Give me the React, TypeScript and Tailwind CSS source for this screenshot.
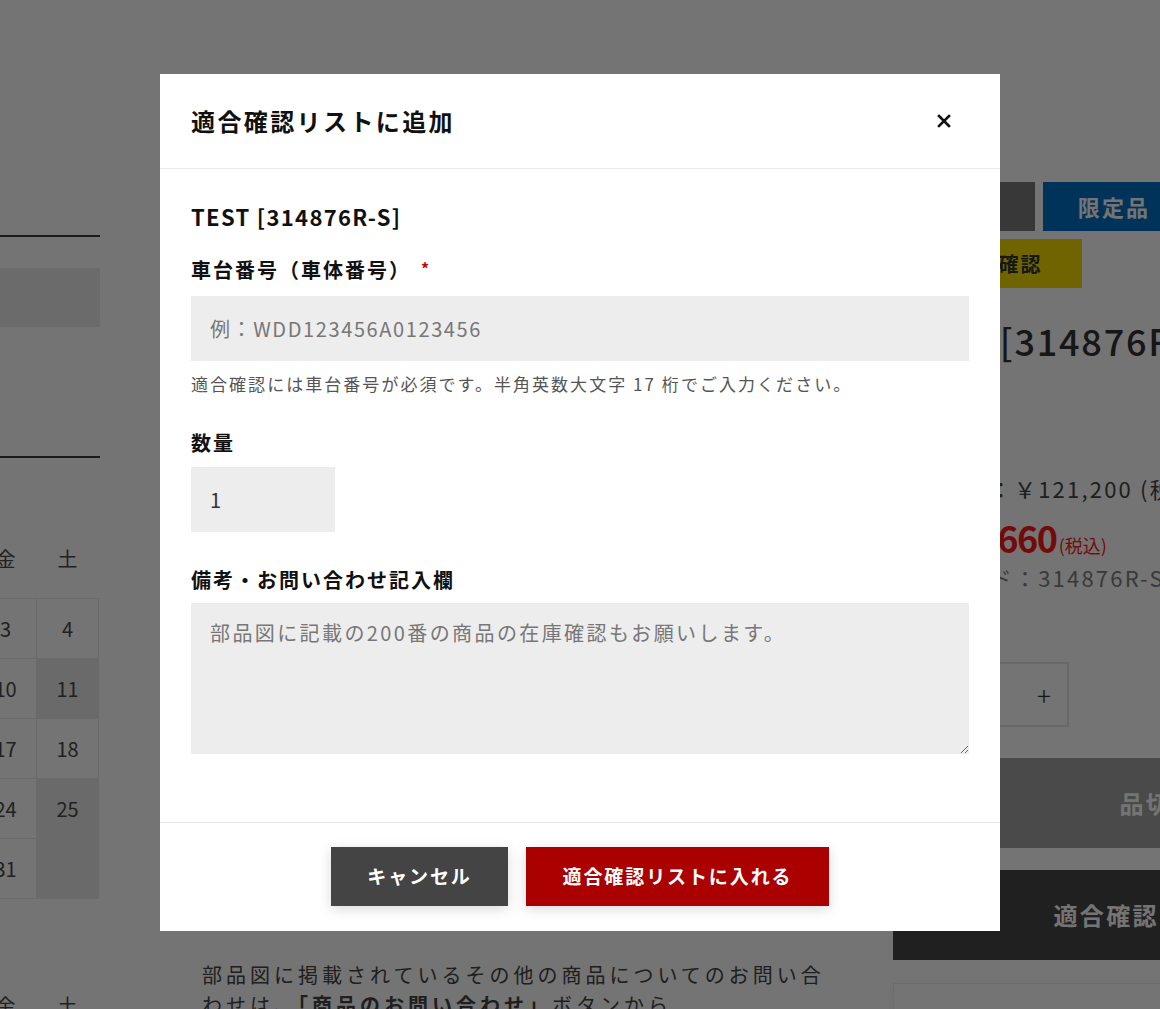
import { useState } from 'react';

const WEEK = ['日', '月', '火', '水', '木', '金', '土'];

const DAYS: { d: string; off?: boolean }[][] = [
  [{ d: '' }, { d: '' }, { d: '' }, { d: '1' }, { d: '2' }, { d: '3' }, { d: '4' }],
  [{ d: '5' }, { d: '6' }, { d: '7' }, { d: '8' }, { d: '9' }, { d: '10' }, { d: '11', off: true }],
  [{ d: '12' }, { d: '13' }, { d: '14' }, { d: '15' }, { d: '16' }, { d: '17' }, { d: '18' }],
  [{ d: '19' }, { d: '20' }, { d: '21' }, { d: '22' }, { d: '23' }, { d: '24' }, { d: '25', off: true }],
  [{ d: '26' }, { d: '27' }, { d: '28' }, { d: '29' }, { d: '30' }, { d: '31' }, { d: '', off: true }],
];

function WeekHeader() {
  return (
    <div className="grid grid-cols-[repeat(7,61px)] gap-px px-px h-[38px] items-center text-[20px] text-[#4a4a4a]">
      {WEEK.map((w) => (
        <span key={w} className="text-center">
          {w}
        </span>
      ))}
    </div>
  );
}

function Sidebar() {
  return (
    <aside className="w-[100px] shrink-0 pt-[235px] overflow-hidden">
      <div className="h-[2px] bg-[#3a3a3a]" />
      <div className="mt-[31px] h-[59px] bg-[#ebebeb]" />
      <div className="mt-[129px] h-[2px] bg-[#3a3a3a]" />
      <div className="flex justify-end pr-[1px] mt-[82px]">
        <div>
          <WeekHeader />
          <div className="mt-[20px] grid grid-cols-[repeat(7,61px)] gap-px p-px bg-[#e8e8e8]">
            {DAYS.flat().map((c, i) => (
              <div
                key={i}
                className={`h-[59px] flex items-center justify-center text-[20px] text-[#4a4a4a] ${
                  c.off ? 'bg-[#e9e9e9]' : 'bg-white'
                }`}
              >
                {c.d}
              </div>
            ))}
          </div>
          <div className="mt-[88px]">
            <WeekHeader />
          </div>
        </div>
      </div>
    </aside>
  );
}

function ProductColumn() {
  return (
    <section className="w-[532px] shrink-0 pt-[182px] text-[#333]">
      <div className="flex gap-[8px]">
        <div className="w-[142px] h-[49px] bg-[#7b7b7b]" />
        <div className="w-[142px] h-[49px] bg-[#0070c6] text-white font-bold text-[22px] tracking-[0.1em] flex items-center justify-center">
          限定品
        </div>
      </div>
      <div className="mt-[8px] w-[189px] h-[49px] bg-[#f6dc00] font-bold text-[20px] tracking-[0.1em] flex items-center justify-center">
        要適合確認
      </div>
      <h1 className="mt-[25px] h-[54px] pl-[3px] text-[36px] leading-[54px] font-medium tracking-[0.05em] whitespace-nowrap">
        TEST [314876R-S]
      </h1>
      <p className="mt-[106px] h-[30px] text-[22px] leading-[30px] tracking-[0.1em] text-[#444] whitespace-nowrap">
        通常価格：￥121,200 (税抜)
      </p>
      <p className="mt-[14px] h-[40px] flex items-baseline text-[#ff1a1a] whitespace-nowrap">
        <span className="text-[36px] leading-[40px] font-bold tracking-[-0.04em]">￥133,660</span>
        <span className="ml-[2px] text-[18px] leading-[40px]">(税込)</span>
      </p>
      <p className="mt-[5px] h-[30px] text-[22px] leading-[30px] tracking-[0.1em] text-[#808080] whitespace-nowrap">
        商品コード：314876R-S
      </p>
      <div className="mt-[70px] w-[176px] h-[65px] border-2 border-[#e5e5e5] flex items-center text-[26px] font-light text-[#333]">
        <span className="w-[46px] text-center">−</span>
        <span className="flex-1 text-center text-[20px]">1</span>
        <span className="w-[46px] text-center">+</span>
      </div>
      <div className="mt-[31px] h-[90px] bg-[#a3a3a3] text-white font-bold text-[24px] tracking-[0.1em] flex items-center justify-center">
        品切れ
      </div>
      <div className="mt-[22px] h-[90px] bg-[#484848] text-white font-bold text-[24px] tracking-[0.1em] flex items-center justify-center">
        適合確認リストへ
      </div>
      <div className="mt-[23px] h-[120px] border border-[#eeeeee] bg-white shadow-[0_2px_8px_rgba(0,0,0,0.08)]" />
    </section>
  );
}

function CloseIcon() {
  return (
    <svg width="14" height="14" viewBox="0 0 14 14" fill="none" stroke="#111" strokeWidth="2.6" strokeLinecap="square">
      <path d="M2 2 L12 12 M12 2 L2 12" />
    </svg>
  );
}

function FitListModal({ onClose }: { onClose: () => void }) {
  const [qty, setQty] = useState('1');

  return (
    <div className="fixed inset-0 bg-[rgba(0,0,0,0.545)] flex justify-center items-start pt-[74px]">
      <div role="dialog" aria-modal="true" className="w-[840px] bg-white text-[#111]">
        <div className="h-[95px] border-b border-[#e8e8e8] pl-[31px] pr-[44px] flex items-center justify-between">
          <h2 className="text-[24px] font-bold tracking-[0.1em]">適合確認リストに追加</h2>
          <button type="button" onClick={onClose} aria-label="閉じる" className="h-6 w-6 flex items-center justify-center">
            <CloseIcon />
          </button>
        </div>

        <div className="px-[31px] pt-[30px] pb-[68px]">
          <p className="text-[22px] leading-[34px] font-bold tracking-[0.06em]">TEST [314876R-S]</p>

          <label className="mt-[22px] flex items-center text-[20px] leading-[30px] font-bold tracking-[0.1em]">
            車台番号（車体番号）
            <span className="ml-[10px] text-[16px] text-[#cc0000] -translate-y-[2px]">*</span>
          </label>
          <input
            type="text"
            placeholder="例：WDD123456A0123456"
            className="mt-[11px] block w-full h-[65px] bg-[#ededed] px-[19px] text-[20px] tracking-[0.08em] text-[#333] placeholder:text-[#777] outline-none"
          />
          <p className="mt-[11px] text-[17px] leading-[24px] tracking-[0.12em] text-[#555]">
            適合確認には車台番号が必須です。半角英数大文字 17 桁でご入力ください。
          </p>

          <label className="mt-[32px] block text-[20px] leading-[30px] font-bold tracking-[0.1em]">数量</label>
          <input
            type="text"
            value={qty}
            onChange={(e) => setQty(e.target.value)}
            className="mt-[9px] block w-[144px] h-[65px] bg-[#ededed] px-[19px] text-[20px] text-[#333] outline-none"
          />

          <label className="mt-[33px] block text-[20px] leading-[30px] font-bold tracking-[0.1em]">
            備考・お問い合わせ記入欄
          </label>
          <textarea
            placeholder="部品図に記載の200番の商品の在庫確認もお願いします。"
            className="mt-[8px] block w-full h-[151px] bg-[#ededed] px-[19px] pt-[18px] text-[20px] leading-[24px] tracking-[0.12em] text-[#333] placeholder:text-[#777] outline-none"
          />
        </div>

        <div className="border-t border-[#e8e8e8] pt-[24px] pb-[25px] flex justify-center gap-[18px]">
          <button
            type="button"
            onClick={onClose}
            className="w-[177px] h-[59px] bg-[#444444] text-white text-[19px] font-bold tracking-[0.1em] shadow-[0_3px_12px_rgba(0,0,0,0.15)]"
          >
            キャンセル
          </button>
          <button
            type="button"
            className="w-[303px] h-[59px] bg-[#aa0000] text-white text-[19px] font-bold tracking-[0.1em] shadow-[0_3px_12px_rgba(0,0,0,0.15)]"
          >
            適合確認リストに入れる
          </button>
        </div>
      </div>
    </div>
  );
}

export default function App() {
  const [open, setOpen] = useState(true);

  return (
    <div className="relative h-[1009px] overflow-hidden bg-white font-['Noto_Sans_CJK_JP','Noto_Sans',sans-serif]">
      <div className="flex">
        <Sidebar />
        <main className="ml-[102px] w-[691px] shrink-0 pt-[960px]">
          <p className="w-[630px] text-[20px] leading-[30px] tracking-[0.2em] text-[#444]">
            部品図に掲載されているその他の商品についてのお問い合わせは、
            <strong className="font-bold">「商品のお問い合わせ」</strong>
            ボタンから
          </p>
        </main>
        <ProductColumn />
      </div>
      {open && <FitListModal onClose={() => setOpen(false)} />}
    </div>
  );
}
